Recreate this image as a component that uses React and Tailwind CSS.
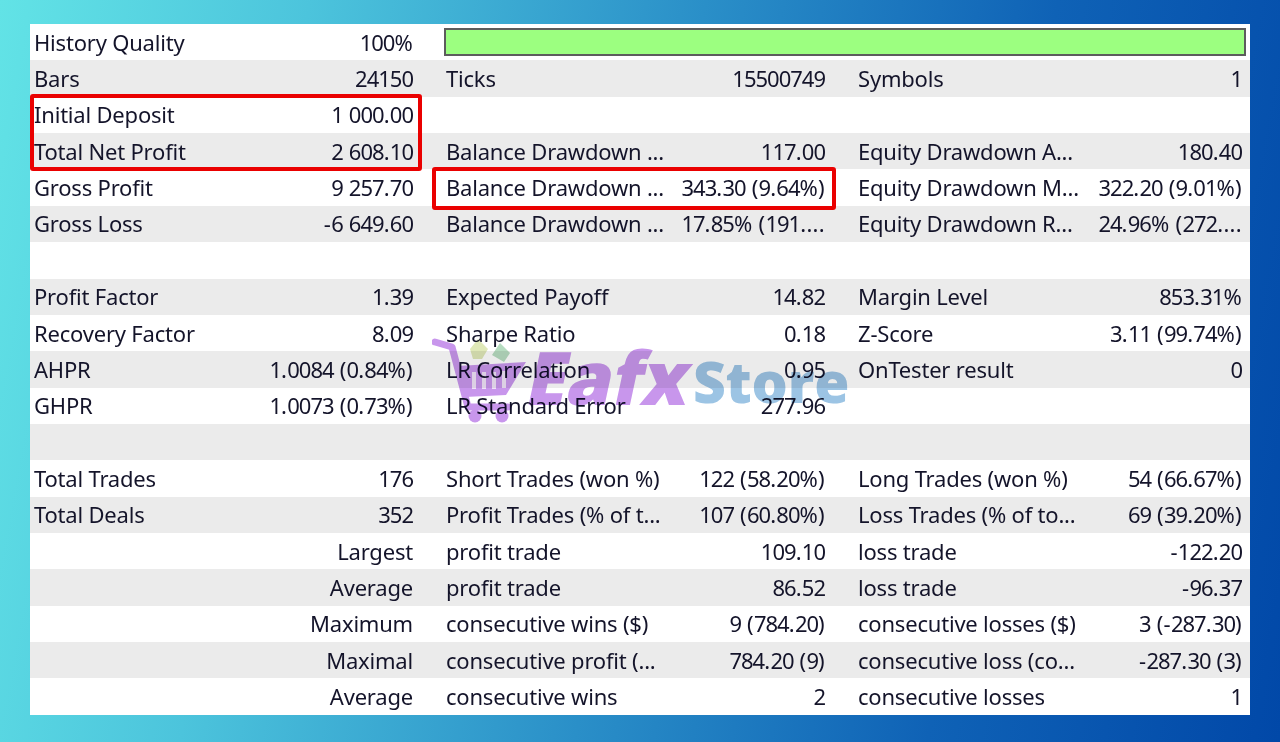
const rows = [
  ['History Quality', '100%', null],
  ['Bars', '24150', 'Ticks', '15500749', 'Symbols', '1'],
  ['Initial Deposit', '1 000.00'],
  ['Total Net Profit', '2 608.10', 'Balance Drawdown ...', '117.00', 'Equity Drawdown A...', '180.40'],
  ['Gross Profit', '9 257.70', 'Balance Drawdown ...', '343.30 (9.64%)', 'Equity Drawdown M...', '322.20 (9.01%)'],
  ['Gross Loss', '-6 649.60', 'Balance Drawdown ...', '17.85% (191....', 'Equity Drawdown R...', '24.96% (272....'],
  [],
  ['Profit Factor', '1.39', 'Expected Payoff', '14.82', 'Margin Level', '853.31%'],
  ['Recovery Factor', '8.09', 'Sharpe Ratio', '0.18', 'Z-Score', '3.11 (99.74%)'],
  ['AHPR', '1.0084 (0.84%)', 'LR Correlation', '0.95', 'OnTester result', '0'],
  ['GHPR', '1.0073 (0.73%)', 'LR Standard Error', '277.96'],
  [],
  ['Total Trades', '176', 'Short Trades (won %)', '122 (58.20%)', 'Long Trades (won %)', '54 (66.67%)'],
  ['Total Deals', '352', 'Profit Trades (% of t...', '107 (60.80%)', 'Loss Trades (% of to...', '69 (39.20%)'],
  ['', 'Largest', 'profit trade', '109.10', 'loss trade', '-122.20'],
  ['', 'Average', 'profit trade', '86.52', 'loss trade', '-96.37'],
  ['', 'Maximum', 'consecutive wins ($)', '9 (784.20)', 'consecutive losses ($)', '3 (-287.30)'],
  ['', 'Maximal', 'consecutive profit (...', '784.20 (9)', 'consecutive loss (co...', '-287.30 (3)'],
  ['', 'Average', 'consecutive wins', '2', 'consecutive losses', '1'],
]

// digits in the reference font are narrower than Noto's, punctuation a bit wider
function Value({ text = '' }) {
  const numeric = /\d/.test(text)
  return (
    <span className={numeric ? 'tracking-[0.3px]' : ''}>
      {text.split(/(\d+)/).map((part, i) =>
        /\d/.test(part) ? <span key={i} className="tracking-[-1px]">{part}</span> : part
      )}
    </span>
  )
}

function Row({ cells, gray }) {
  const isBar = cells[2] === null
  return (
    <div className={`flex h-[36.37px] items-center whitespace-nowrap ${gray ? 'bg-[#ebebeb]' : 'bg-white'}`}>
      <div className="w-[383px] flex justify-between pl-[4px] shrink-0">
        <span>{cells[0]}</span>
        <Value text={cells[1]} />
      </div>
      {isBar ? (
        <div className="ml-[31px] h-[28px] w-[802px] border-2 border-[#5c5c5c] bg-[#9cff80]" />
      ) : (
        <>
          <div className="ml-[33px] w-[379px] flex justify-between shrink-0">
            <span>{cells[2]}</span>
            <Value text={cells[3]} />
          </div>
          <div className="ml-[33px] w-[384px] flex justify-between shrink-0">
            <span>{cells[4]}</span>
            <Value text={cells[5]} />
          </div>
        </>
      )}
    </div>
  )
}

function Watermark() {
  return (
    <div className="absolute left-[402px] top-[311px] flex items-start mix-blend-multiply pointer-events-none font-['Open_Sans',sans-serif]">
      <svg width="95" height="90" viewBox="0 0 95 90" fill="none">
        <path d="M3 7 L20 12 L36 72 L76 72" stroke="#c896ec" strokeWidth="7" strokeLinecap="round" strokeLinejoin="round" />
        <path d="M25 31 L94 27 L74 60 L33 62 Z" fill="#c896ec" />
        <path d="M42 37v17M52 37v17M62 37v17M72 36v17" stroke="#efe2f8" strokeWidth="4" />
        <circle cx="43" cy="81" r="6.5" fill="#c896ec" />
        <circle cx="70" cy="81" r="6.5" fill="#c896ec" />
        <path d="M38 14 L46 4 L56 14 L50 24 L41 24 Z" fill="#dfe8b8" />
        <path d="M60 20 L68 8 L78 18 L72 27 Z" fill="#b6dcc0" />
      </svg>
      <span className="ml-[2px] mt-[5px] inline-block -skew-x-12 text-[74px] leading-none font-extrabold tracking-[-0.5px] text-[#c896ec]">Eafx</span>
      <span className="ml-[2px] mt-[18px] text-[57px] leading-none font-extrabold text-[#9cc4e4]">Store</span>
    </div>
  )
}

export default function App() {
  return (
    <div className="h-[742px] w-[1280px] overflow-hidden bg-[linear-gradient(100deg,#62e3e6_0%,#4cc4dc_22%,#2a8fc8_50%,#0f62b6_75%,#0148a8_100%)] pl-[30px] pt-[24px]">
      <div className="relative w-[1220px] font-['Noto_Sans',sans-serif] text-[22px] tracking-[-0.2px] text-[#14142a]">
        {rows.map((cells, i) => (
          <Row key={i} cells={cells} gray={i % 2 === 1} />
        ))}
        <Watermark />
        <div className="absolute left-0 top-[70px] h-[77px] w-[392px] rounded-[3px] border-[4px] border-[#ea0000]" />
        <div className="absolute left-[402px] top-[143px] h-[43px] w-[404px] rounded-[3px] border-[4px] border-[#ea0000]" />
      </div>
    </div>
  )
}
